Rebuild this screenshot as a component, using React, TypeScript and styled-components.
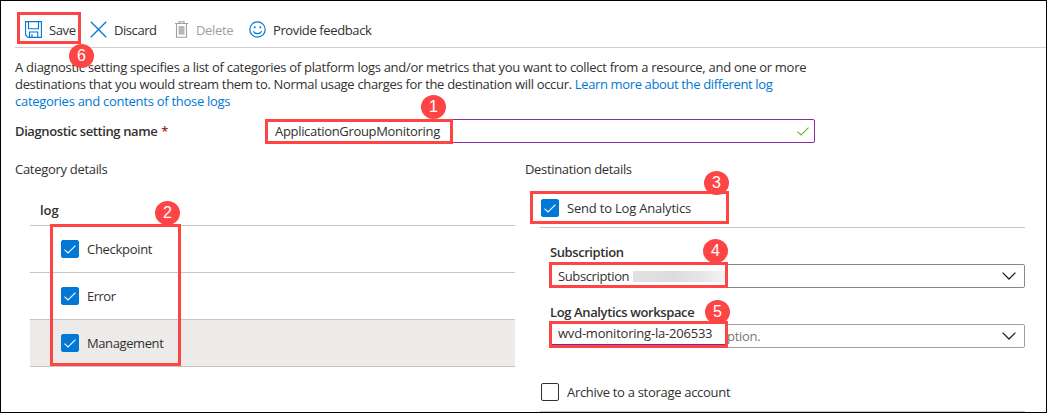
import React from "react";
import styled, { createGlobalStyle } from "styled-components";

const Global = createGlobalStyle`
  *, *::before, *::after { box-sizing: border-box; }
  body { margin: 0; background: #fff; }
`;

const Page = styled.div`
  position: relative;
  width: 1047px;
  height: 413px;
  overflow: hidden;
  border: 1px solid #000;
  background: #fff;
  color: #323130;
  font-family: "Open Sans", "Noto Sans", sans-serif;
  font-size: 13px;
  line-height: 17px;
`;

const Label = styled.span<{ $track?: number; $weight?: number; $color?: string }>`
  letter-spacing: ${(p) => p.$track ?? -0.3}px;
  font-weight: ${(p) => p.$weight ?? 400};
  color: ${(p) => p.$color ?? "inherit"};
  white-space: pre;
`;

const Toolbar = styled.div`
  display: flex;
  align-items: center;
  height: 47px;
  margin: 0 0 0 14px;
  padding: 11px 0 0 10px;
  border-bottom: 1px solid #d2d0ce;
`;

const Command = styled.div<{ $width: number; $disabled?: boolean }>`
  display: flex;
  align-items: center;
  gap: 7px;
  width: ${(p) => p.$width}px;
  color: ${(p) => (p.$disabled ? "#a19f9d" : "#323130")};
  svg { flex: none; }
  span { position: relative; top: 1px; }
`;

const Intro = styled.div`
  margin: 11px 0 0 14px;
`;

const Line = styled.div`
  height: 17px;
`;

const NameRow = styled.div`
  display: flex;
  align-items: center;
  height: 24px;
  margin: 9px 0 0 14px;
`;

const NameLabel = styled.div`
  display: flex;
  gap: 4px;
  width: 251px;
`;

const Field = styled.div<{ $border: string; $pad: number; $width: number }>`
  display: flex;
  align-items: center;
  justify-content: space-between;
  width: ${(p) => p.$width}px;
  height: 24px;
  padding: 0 ${(p) => p.$pad}px 0 8px;
  border: 1px solid ${(p) => p.$border};
  border-radius: 2px;
`;

const Hint = styled(Label)`
  margin-left: 169px;
`;

const Columns = styled.div`
  display: flex;
  margin-top: 18px;
`;

const Categories = styled.div`
  width: 510px;
  padding-left: 14px;
`;

const Table = styled.div`
  width: 485px;
  margin: 24px 0 0 15px;
`;

const TableHead = styled.div`
  height: 24px;
  padding-left: 10px;
  border-bottom: 1px solid #c8c6c4;
`;

const TableRow = styled.div<{ $active?: boolean }>`
  display: flex;
  align-items: center;
  height: 47px;
  padding-left: 31px;
  background: ${(p) => (p.$active ? "#edebe9" : "#fff")};
  border-bottom: 1px solid #c8c6c4;
`;

const Choice = styled.div`
  display: flex;
  align-items: center;
  gap: 8px;
`;

const Box = styled.span<{ $checked?: boolean }>`
  display: flex;
  align-items: center;
  justify-content: center;
  width: 18px;
  height: 18px;
  border-radius: 2px;
  border: 1px solid ${(p) => (p.$checked ? "#0078d4" : "#323130")};
  background: ${(p) => (p.$checked ? "#0078d4" : "#fff")};
`;

const Destinations = styled.div`
  padding-left: 14px;
`;

const Panel = styled.div`
  width: 485px;
  margin-left: 15px;
`;

const PanelHead = styled.div`
  height: 50px;
  padding: 21px 0 0 1px;
  border-bottom: 1px solid #c8c6c4;
`;

const PanelField = styled.div`
  padding: 16px 0 0 9px;
`;

const FieldLabel = styled.div`
  margin-bottom: 3px;
  padding-left: 1px;
`;

const Redacted = styled.span`
  width: 92px;
  height: 11px;
  margin-right: auto;
  margin-left: 4px;
  background: linear-gradient(90deg, #e2e2e3, #dcdcde 45%, #e6e6e8 75%, #f4f4f4);
`;

const Archive = styled.div`
  height: 64px;
  padding: 35px 0 0 1px;
  border-bottom: 1px solid #c8c6c4;
`;

const Outline = styled.div<{ $x: number; $y: number; $w: number; $h: number; $filled?: boolean }>`
  position: absolute;
  left: ${(p) => p.$x - 1}px;
  top: ${(p) => p.$y - 1}px;
  width: ${(p) => p.$w}px;
  height: ${(p) => p.$h}px;
  border: 3px solid #fe4545;
  background: ${(p) => (p.$filled ? "#fff" : "transparent")};
`;

const PastedValue = styled.div`
  height: 21px;
  padding: 1px 0 0 6px;
  border-bottom: 1px solid #7a2a9c;
`;

const Badge = styled.div<{ $x: number; $y: number }>`
  position: absolute;
  left: ${(p) => p.$x - 1}px;
  top: ${(p) => p.$y - 1}px;
  width: 25px;
  height: 24px;
  border-radius: 50%;
  background: #fe4545;
  color: #fff;
  font: 16px/24px "Liberation Sans", Arial, sans-serif;
  text-align: center;
`;

const Tick = ({ color }: { color: string }) => (
  <svg width="12" height="9" viewBox="0 0 12 9" fill="none" stroke={color} strokeWidth="1.1">
    <path d="M.5 4.6 4 8 11.5.6" />
  </svg>
);

const Chevron = () => (
  <svg width="14" height="8" viewBox="0 0 14 8" fill="none" stroke="#201f1e" strokeWidth="1.3">
    <path d="M.6.6 7 7 13.4.6" />
  </svg>
);

const SaveIcon = () => (
  <svg width="17" height="17" viewBox="0 0 17 17" fill="none" stroke="#0078d4" strokeWidth="1.1">
    <path d="M.6.6h15.8v15.8H3L.6 14z" />
    <path d="M3.5.8v7h10v-7M4.5 16v-5h8.3v5M7 13v3" />
  </svg>
);

const DiscardIcon = () => (
  <svg width="17" height="17" viewBox="0 0 17 17" stroke="#0078d4" strokeWidth="1.3">
    <path d="M.8.8l15.4 15.4M16.2.8.8 16.2" />
  </svg>
);

const DeleteIcon = () => (
  <svg width="15" height="17" viewBox="0 0 15 17" fill="none" stroke="#a19f9d" strokeWidth="1.1">
    <path d="M1 2.5h13M5 2.5V.8h5v1.7M2.5 2.5v13.7h10V2.5" />
    <path d="M4.5 5h6v8.7h-6z" fill="#b9b7b5" stroke="none" />
  </svg>
);

const SmileIcon = () => (
  <svg width="17" height="17" viewBox="0 0 17 17" fill="none" stroke="#0078d4" strokeWidth="1.2">
    <circle cx="8.5" cy="8.5" r="7.7" />
    <path d="M4.3 10.3c1.6 3.2 6.8 3.2 8.4 0" />
    <circle cx="5.7" cy="6.2" r="1" fill="#0078d4" stroke="none" />
    <circle cx="11.3" cy="6.2" r="1" fill="#0078d4" stroke="none" />
  </svg>
);

const CheckBox = ({ checked }: { checked?: boolean }) => (
  <Box $checked={checked}>{checked && <Tick color="#fff" />}</Box>
);

const rows = [
  { name: "Checkpoint", track: -0.3 },
  { name: "Error", track: -0.5 },
  { name: "Management", track: -0.4 },
];

const badges: [number, number][] = [[421, 95], [155, 201], [704, 171], [703, 239], [705, 300], [69, 44]];

export default function App() {
  return (
    <Page>
      <Global />
      <Toolbar>
        <Command $width={65}><SaveIcon /><Label $track={-0.4}>Save</Label></Command>
        <Command $width={84}><DiscardIcon /><Label $track={-0.43}>Discard</Label></Command>
        <Command $width={75} $disabled><DeleteIcon /><Label $track={-0.33}>Delete</Label></Command>
        <Command $width={140}><SmileIcon /><Label $track={-0.38}>Provide feedback</Label></Command>
      </Toolbar>
      <Intro>
        <Line>
          <Label $track={-0.288}>A diagnostic setting specifies a list of categories of platform logs and/or metrics that you want to collect from a resource, and one or more</Label>
        </Line>
        <Line>
          <Label $track={-0.317}>destinations that you would stream them to. Normal usage charges for the destination will occur. </Label>
          <Label $track={-0.37} $color="#0078d4">Learn more about the different log</Label>
        </Line>
        <Line><Label $track={-0.28} $color="#0078d4">categories and contents of those logs</Label></Line>
      </Intro>
      <NameRow>
        <NameLabel>
          <Label $weight={600} $track={-0.39}>Diagnostic setting name</Label>
          <Label $color="#a4262c" $weight={600}>*</Label>
        </NameLabel>
        <Field $border="#8a2da5" $pad={5} $width={549}>
          <Label $track={-0.32}>ApplicationGroupMonitoring</Label>
          <Tick color="#6bb130" />
        </Field>
      </NameRow>
      <Columns>
        <Categories>
          <Label>Category details</Label>
          <Table>
            <TableHead><Label $weight={600} $track={0}>log</Label></TableHead>
            {rows.map((row, i) => (
              <TableRow key={row.name} $active={i === 2}>
                <Choice><CheckBox checked /><Label $track={row.track}>{row.name}</Label></Choice>
              </TableRow>
            ))}
          </Table>
        </Categories>
        <Destinations>
          <Label $track={-0.33}>Destination details</Label>
          <Panel>
            <PanelHead>
              <Choice><CheckBox checked /><Label $track={-0.2}>Send to Log Analytics</Label></Choice>
            </PanelHead>
            <PanelField>
              <FieldLabel><Label $weight={600} $track={-0.42}>Subscription</Label></FieldLabel>
              <Field $border="#8a8886" $pad={8} $width={476}>
                <Label $track={-0.38}>Subscription</Label>
                <Redacted />
                <Chevron />
              </Field>
            </PanelField>
            <PanelField>
              <FieldLabel><Label $weight={600} $track={-0.38}>Log Analytics workspace</Label></FieldLabel>
              <Field $border="#a19f9d" $pad={8} $width={476}>
                <Hint $color="#797775">ption.</Hint>
                <Chevron />
              </Field>
            </PanelField>
            <Archive>
              <Choice><CheckBox /><Label>Archive to a storage account</Label></Choice>
            </Archive>
          </Panel>
        </Destinations>
      </Columns>
      <Outline $x={17} $y={12} $w={64} $h={32} />
      <Outline $x={265} $y={119} $w={188} $h={25} />
      <Outline $x={50} $y={224} $w={131} $h={142} />
      <Outline $x={530} $y={191} $w={199} $h={33} />
      <Outline $x={549} $y={262} $w={179} $h={26} />
      <Outline $x={549} $y={321} $w={179} $h={27} $filled>
        <PastedValue><Label $track={-0.21}>wvd-monitoring-la-206533</Label></PastedValue>
      </Outline>
      {badges.map(([x, y], i) => <Badge key={i} $x={x} $y={y}>{i + 1}</Badge>)}
    </Page>
  );
}
